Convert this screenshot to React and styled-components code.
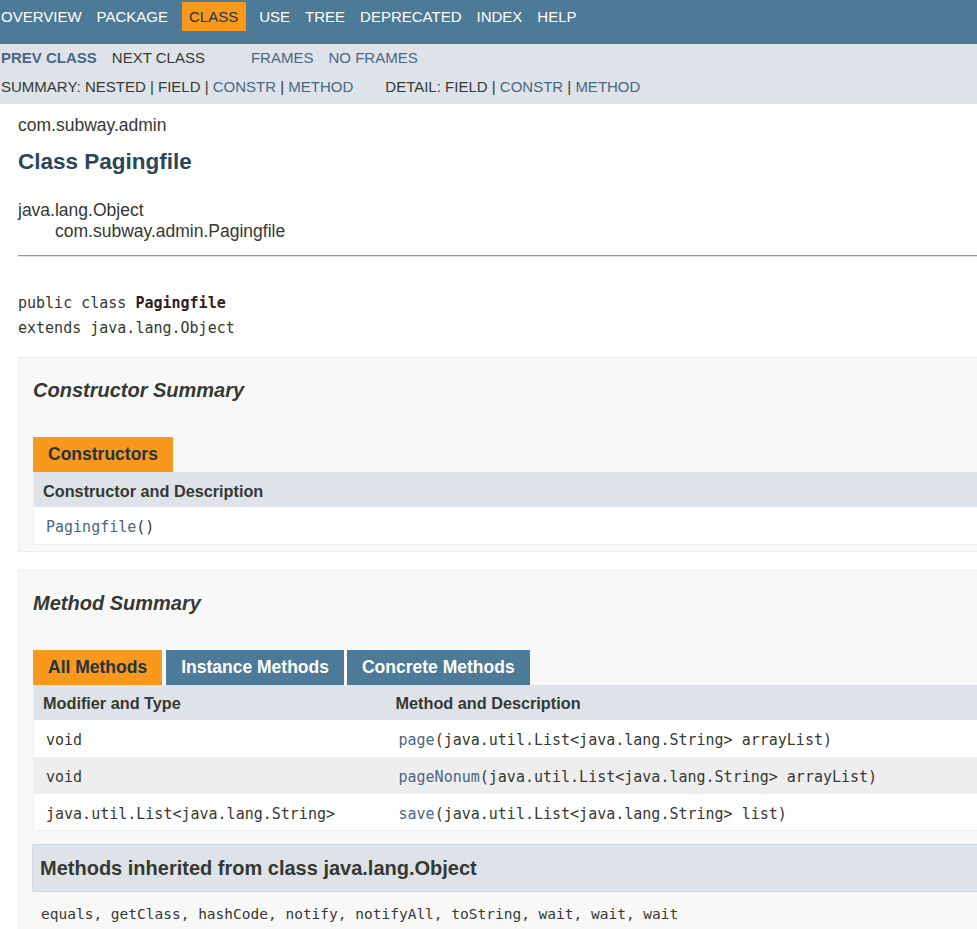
import React from "react";
import styled, { createGlobalStyle } from "styled-components";

const GlobalStyle = createGlobalStyle`
  html, body {
    margin: 0;
    padding: 0;
    background: #ffffff;
    overflow-x: hidden;
  }
  body {
    font-family: "Liberation Sans", Arial, sans-serif;
    color: #353833;
    font-size: 17.5px;
  }
`;

const LINK = "#4A6782";
const MONO = `"DejaVu Sans Mono", "Liberation Mono", monospace`;

const TopNav = styled.div`
  background: #4d7a97;
  height: 44px;
  box-sizing: border-box;
  padding-top: 2px;
`;

const NavList = styled.ul`
  display: flex;
  margin: 0;
  padding: 0;
  list-style: none;
`;

const NavItem = styled.li`
  font-size: 15px;
  line-height: 29px;
  height: 29px;
  color: ${(p) => (p.$active ? "#253441" : "#ffffff")};
  background: ${(p) => (p.$active ? "#f8981d" : "transparent")};
  padding: 0 7.5px;
  margin: ${(p) => (p.$active ? "0 6px" : "0")};
  &:first-child {
    padding-left: 1px;
  }
`;

const SubNav = styled.div`
  background: #dee3e9;
  height: 60px;
  box-sizing: border-box;
  padding-top: 2px;
`;

const SubRow = styled.div`
  display: flex;
  font-size: 15px;
  line-height: 24px;
  height: 24px;
  margin-top: ${(p) => p.$top || 0}px;
  padding-left: 1px;
`;

const SubGroup = styled.div`
  display: flex;
  gap: 15px;
  margin-right: ${(p) => p.$gap || 0}px;
  white-space: pre;
`;

const SubLink = styled.span`
  color: ${(p) => (p.$link ? LINK : "#353833")};
  font-weight: ${(p) => (p.$bold ? 700 : 400)};
`;

const Content = styled.div`
  padding-left: 18px;
`;

const SubTitle = styled.div`
  margin-top: 10px;
  line-height: 22px;
  font-size: 17.5px;
`;

const Title = styled.h2`
  margin: 12px 0 0;
  font-size: 22.5px;
  line-height: 28px;
  font-weight: 700;
  color: #2c4557;
`;

const Inheritance = styled.div`
  margin-top: 23px;
  font-size: 17.5px;
  line-height: 22px;
`;

const InheritChild = styled.div`
  padding-left: 37px;
  line-height: 21px;
`;

const Rule = styled.hr`
  margin: 13px 0 0;
  border: 0;
  border-top: 1px solid #9c9c9c;
  border-bottom: 1px solid #e4e4e4;
  height: 0;
`;

const Signature = styled.pre`
  margin: 34px 0 0;
  font-family: ${MONO};
  font-size: 15px;
  line-height: 25px;
  color: #353833;
`;

const Strong = styled.b`
  font-weight: 700;
  color: #2e2020;
`;

const Block = styled.section`
  margin-top: ${(p) => p.$top}px;
  background: #f8f8f8;
  border: 1px solid #ededed;
  border-right: 0;
  padding: 19px 0 6px 14px;
`;

const BlockTitle = styled.h3`
  margin: 0;
  font-size: 20px;
  line-height: 26px;
  font-style: italic;
  font-weight: 700;
  color: #353833;
`;

const Tabs = styled.div`
  display: flex;
  margin-top: 34px;
  gap: ${(p) => (p.$many ? "3px" : "0")};
`;

const Tab = styled.span`
  height: 35px;
  line-height: 35px;
  padding: 0 15px;
  font-size: 17.5px;
  font-weight: 700;
  background: ${(p) => (p.$active ? "#f8981d" : "#4d7a97")};
  color: ${(p) => (p.$active ? "#253441" : "#ffffff")};
  margin-right: ${(p) => (p.$active && p.$gapAfter ? "1px" : "0")};
`;

const Table = styled.table`
  width: 100%;
  border-collapse: collapse;
  border-left: 1px solid #eeeeee;
  border-bottom: 1px solid #eeeeee;
  table-layout: fixed;
`;

const Th = styled.th`
  background: #dee3e9;
  text-align: left;
  font-size: 16.25px;
  font-weight: 700;
  height: 35px;
  padding: 3px 0 0 9px;
  box-sizing: border-box;
  width: ${(p) => p.$w || "auto"};
`;

const Td = styled.td`
  height: 37px;
  box-sizing: border-box;
  padding: 4px 0 0 12px;
  font-family: ${MONO};
  font-size: 15px;
  white-space: nowrap;
  background: ${(p) => (p.$alt ? "#eeeeef" : "#ffffff")};
`;

const MemberLink = styled.span`
  color: ${LINK};
`;

const InheritedBox = styled.div`
  margin-top: 13px;
  margin-left: -1px;
`;

const InheritedHead = styled.h3`
  margin: 0;
  height: 48px;
  box-sizing: border-box;
  background: #dee3e9;
  border: 1px solid #d0d9e0;
  border-right: 0;
  padding: 0 0 0 7px;
  line-height: 46px;
  font-size: 20px;
  font-weight: 700;
  color: #353833;
`;

const InheritedList = styled.div`
  margin-top: 11px;
  padding-left: 9px;
  font-family: ${MONO};
  font-size: 14.5px;
  line-height: 22px;
  white-space: nowrap;
`;

const topItems = ["OVERVIEW", "PACKAGE", "CLASS", "USE", "TREE", "DEPRECATED", "INDEX", "HELP"];

const methods = [
  { type: "void", name: "page", args: "(java.util.List<java.lang.String> arrayList)" },
  { type: "void", name: "pageNonum", args: "(java.util.List<java.lang.String> arrayList)" },
  { type: "java.util.List<java.lang.String>", name: "save", args: "(java.util.List<java.lang.String> list)" },
];

const App = () => (
  <>
    <GlobalStyle />
    <TopNav>
      <NavList>
        {topItems.map((t) => (
          <NavItem key={t} $active={t === "CLASS"}>
            {t}
          </NavItem>
        ))}
      </NavList>
    </TopNav>
    <SubNav>
      <SubRow>
        <SubGroup $gap={46}>
          <SubLink $link $bold>PREV CLASS</SubLink>
          <SubLink>NEXT CLASS</SubLink>
        </SubGroup>
        <SubGroup>
          <SubLink $link>FRAMES</SubLink>
          <SubLink $link>NO FRAMES</SubLink>
        </SubGroup>
      </SubRow>
      <SubRow $top={5}>
        <SubGroup $gap={32}>
          <span>
            <SubLink>SUMMARY: NESTED | FIELD | </SubLink>
            <SubLink $link>CONSTR</SubLink>
            <SubLink> | </SubLink>
            <SubLink $link>METHOD</SubLink>
          </span>
        </SubGroup>
        <SubGroup>
          <span>
            <SubLink>DETAIL: FIELD | </SubLink>
            <SubLink $link>CONSTR</SubLink>
            <SubLink> | </SubLink>
            <SubLink $link>METHOD</SubLink>
          </span>
        </SubGroup>
      </SubRow>
    </SubNav>
    <Content>
      <SubTitle>com.subway.admin</SubTitle>
      <Title>Class Pagingfile</Title>
      <Inheritance>
        <div>java.lang.Object</div>
        <InheritChild>com.subway.admin.Pagingfile</InheritChild>
      </Inheritance>
      <Rule />
      <Signature>
        public class <Strong>Pagingfile</Strong>
        {"\n"}extends java.lang.Object
      </Signature>

      <Block $top={16}>
        <BlockTitle>Constructor Summary</BlockTitle>
        <Tabs>
          <Tab $active>Constructors</Tab>
        </Tabs>
        <Table>
          <thead>
            <tr>
              <Th>Constructor and Description</Th>
            </tr>
          </thead>
          <tbody>
            <tr>
              <Td>
                <MemberLink>Pagingfile</MemberLink>()
              </Td>
            </tr>
          </tbody>
        </Table>
      </Block>

      <Block $top={18}>
        <BlockTitle>Method Summary</BlockTitle>
        <Tabs $many>
          <Tab $active $gapAfter>All Methods</Tab>
          <Tab>Instance Methods</Tab>
          <Tab>Concrete Methods</Tab>
        </Tabs>
        <Table>
          <thead>
            <tr>
              <Th $w="353px">Modifier and Type</Th>
              <Th>Method and Description</Th>
            </tr>
          </thead>
          <tbody>
            {methods.map((m, i) => (
              <tr key={m.name}>
                <Td $alt={i % 2 === 1}>{m.type}</Td>
                <Td $alt={i % 2 === 1}>
                  <MemberLink>{m.name}</MemberLink>
                  {m.args}
                </Td>
              </tr>
            ))}
          </tbody>
        </Table>
        <InheritedBox>
          <InheritedHead>Methods inherited from class java.lang.Object</InheritedHead>
          <InheritedList>
            equals, getClass, hashCode, notify, notifyAll, toString, wait, wait, wait
          </InheritedList>
        </InheritedBox>
      </Block>
    </Content>
  </>
);

export default App;
